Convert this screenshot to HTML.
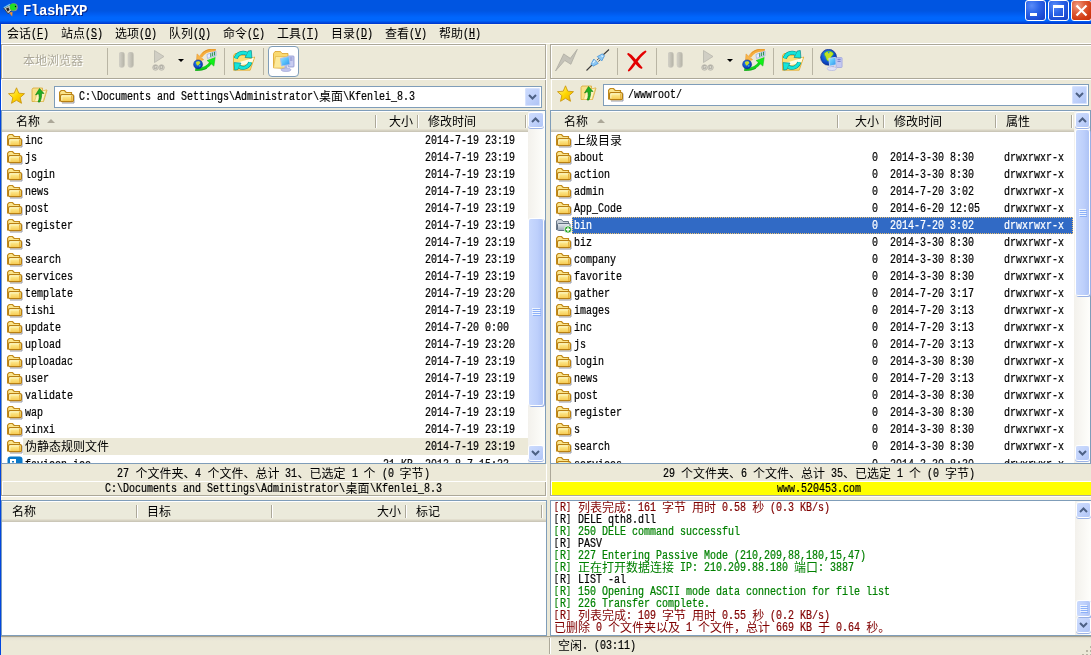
<!DOCTYPE html>
<html lang="zh-CN"><head><meta charset="utf-8"><title>FlashFXP</title>
<style>
html,body{margin:0;padding:0}
body{width:1091px;height:655px;overflow:hidden;background:#ece9d8;position:relative;font-family:"Liberation Mono","Noto Sans CJK SC",monospace}
.t{position:absolute;white-space:pre;font-size:12px;line-height:12px;height:12px;color:#000}
.t b{font-weight:normal;display:inline-block;transform:scaleX(.83333);transform-origin:0 50%;-webkit-text-stroke:.22px}
.t i{font-style:normal;position:relative;top:1px}

.t s{text-decoration:none;font-size:10px;letter-spacing:1.2px;position:relative;top:-1px}
.t u{text-decoration:underline;text-underline-offset:1px}
.ic{position:absolute;overflow:visible}
.w{color:#fff}
.g{color:#008000}.r{color:#800000}
.hd{position:absolute;background:#ebeadb;border-bottom:1px solid #cbc7b8;box-shadow:inset 0 -1px 0 #d6d2c2,inset 0 -2px 0 #e2dece}
.sb{position:absolute;background:linear-gradient(90deg,#f3f1ec,#fefefb)}
.bt{position:absolute;border-radius:2px;background:linear-gradient(135deg,#cddcfd 0%,#c1d2fb 50%,#b0c5f6 100%);box-shadow:0 0 0 1px #fff,0 1px 0 1px #9db4e8}
.th{position:absolute;border-radius:2px;background:linear-gradient(90deg,#c9d9fd,#bdcffb 60%,#aec3f5);box-shadow:0 0 0 1px #fff,1px 1px 0 1px #98b0e4}
</style></head><body><div id="root" style="position:absolute;left:0;top:0;width:1091px;height:655px;overflow:hidden;will-change:transform">
<svg width="0" height="0" style="position:absolute">
<defs>
<linearGradient id="gf" x1="0" y1="0" x2="0" y2="1"><stop offset="0" stop-color="#fff6a8"/><stop offset="1" stop-color="#f6c84c"/></linearGradient>
<linearGradient id="gf2" x1="0" y1="0" x2="0" y2="1"><stop offset="0" stop-color="#e8ecf0"/><stop offset="1" stop-color="#9aa8b8"/></linearGradient>
<linearGradient id="gp" x1="0" y1="0" x2="1" y2="0"><stop offset="0" stop-color="#d4d2c8"/><stop offset="1" stop-color="#b4b2a6"/></linearGradient>
<radialGradient id="gg" cx="0.4" cy="0.35" r="0.75"><stop offset="0" stop-color="#2c84f4"/><stop offset=".6" stop-color="#0c4cc8"/><stop offset="1" stop-color="#06248c"/></radialGradient>
<linearGradient id="gs" x1="0" y1="0" x2="1" y2="1"><stop offset="0" stop-color="#fff9a0"/><stop offset="0.5" stop-color="#ffd800"/><stop offset="1" stop-color="#e8a800"/></linearGradient>
<linearGradient id="gm" x1="0" y1="0" x2="1" y2="1"><stop offset="0" stop-color="#9ae4ff"/><stop offset=".5" stop-color="#58c0fa"/><stop offset="1" stop-color="#2e8cec"/></linearGradient>
<symbol id="fo" viewBox="0 0 16 16">
<path d="M15 7.500v7.500H3" fill="none" stroke="#6a7088" stroke-opacity=".7" stroke-width="1"/>
<path d="M.600 13.500V4.200L2.200 2.500h3.300L7.200 4.500h5.300v2.500" fill="#fbe58c" stroke="#c0891a" stroke-width="1.200"/>
<rect x="1.600" y="6.600" width="12.800" height="7" rx="1.200" fill="url(#gf)" stroke="#b87f12" stroke-width="1.200"/>
<path d="M2.800 12.500v-4.700h9" fill="none" stroke="#fffbd0" stroke-opacity=".95"/>
<path d="M12.500 8v5" stroke="#eab540" stroke-width="1"/>
</symbol>
<symbol id="fos" viewBox="0 0 16 16">
<path d="M.5 13V4L2 2.5h3.5L7 4.5h5.5v2.5" fill="#c8d0d8" stroke="#6a7888"/>
<rect x="1.5" y="6.5" width="12.5" height="7" rx="1" fill="url(#gf2)" stroke="#5f6f80"/>
<circle cx="12" cy="12.5" r="3.6" fill="#18a018" stroke="#fff" stroke-width=".8"/>
<path d="M12 10.3v4.4M9.8 12.5h4.4" stroke="#fff" stroke-width="1.4"/>
</symbol>
<symbol id="dd" viewBox="0 0 9 6"><path d="M1 1l3.5 3.5L8 1" fill="none" stroke="#4d6185" stroke-width="2"/></symbol>
<symbol id="du" viewBox="0 0 9 6"><path d="M1 5l3.5-3.5L8 5" fill="none" stroke="#4d6185" stroke-width="2"/></symbol>
<symbol id="pause" viewBox="0 0 16 16"><rect x="0" y="0" width="5.5" height="15.5" rx="2.7" fill="url(#gp)" stroke="#c8c6bc" stroke-width=".5"/><rect x="9" y="0" width="5.5" height="15.5" rx="2.7" fill="url(#gp)" stroke="#c8c6bc" stroke-width=".5"/></symbol>
<symbol id="play" viewBox="0 0 14 22"><path d="M2.5 .5l9.5 6-9.5 6z" fill="#d0cec4" stroke="#b8b6ac" stroke-width=".8"/><circle cx="3.5" cy="17.5" r="2.8" fill="#d8d6cc" stroke="#b0aea4" stroke-width=".7"/><circle cx="9.5" cy="17.5" r="2.8" fill="#d8d6cc" stroke="#b0aea4" stroke-width=".7"/><text x="1.6" y="19.3" font-family="Liberation Sans,sans-serif" font-size="5" font-weight="bold" fill="#a8a69c">G</text><text x="7.6" y="19.3" font-family="Liberation Sans,sans-serif" font-size="5" font-weight="bold" fill="#a8a69c">O</text></symbol>
<symbol id="xfer" viewBox="0 0 24 22">
<path d="M2.300 20.300c7 .5 12.500-1.300 16-7.500" fill="none" stroke="#14d21c" stroke-width="2.800"/>
<path d="M2 21.200c5 .5 9-.3 12-2" fill="none" stroke="#0a9a10" stroke-width=".7"/>
<path d="M14.100 11.500l8.100-3-1.300 8.600z" fill="#10f018" stroke="#0cb414" stroke-width=".5"/>
<path d="M22.800 1.100c-7-.6-12.300 1.800-15 6.800" fill="none" stroke="#f6ac3c" stroke-width="3"/>
<path d="M22.800 .2c-6-.4-10.500 1-13.500 4" fill="none" stroke="#d8861c" stroke-width=".6"/>
<path d="M4 4.900l6.700 5.800-7.300 2.300z" fill="#f9b548" stroke="#e0922a" stroke-width=".5"/>
<path d="M14 5.500l9-3.400v4.700l-8.500 2.600z" fill="#e6ecff" stroke="#8aa0e0" stroke-width=".6"/>
<path d="M17.800 4.300v3.600M19.700 3.600v3.600M21.600 2.900v3.600" stroke="#1c8a3c" stroke-width="1"/>
<circle cx="5.100" cy="15.400" r="4.500" fill="url(#gg)" stroke="#0a2484" stroke-width=".5"/>
<path d="M3 13c1.800-1.200 3.800-.8 4.300.4.200 1.200-1.200 1.400-1.600 2.600-.4.900-1.800.5-2.200-.8-.4-.8-.7-1.500-.5-2.200z" fill="#c8dc28"/><path d="M6 16.300c.9-.4 1.700 0 1.700.8l-1.200.9z" fill="#38c0e8"/>
</symbol>
<symbol id="refr" viewBox="0 0 24 22">
<path d="M1.500 20.200V5.500l1.500-2h5l1.500 2h8.500v3.300l4.700-1.800-4.500 13.200z" fill="#fbdf74" stroke="#e2a82a" stroke-width=".8"/>
<path d="M2.500 12.500c6-.5 12.500-2.300 19.500-5l-1.500 4.500c-6 2.500-12 3.500-18 3.500z" fill="#fffbe6"/>
<path d="M3.760 8.360A7.500 7.500 0 0 1 14.750 3.800" stroke="#0e8888" stroke-width="4" fill="none"/>
<path d="M18.240 12.240A7.500 7.500 0 0 1 7.250 16.800" stroke="#0e8888" stroke-width="4" fill="none"/>
<path d="M13.100 7.500L16.100 1.100 19.300 .500l.6 7.500z" fill="#14e6da" stroke="#0e8888" stroke-width=".7"/>
<path d="M8.900 13.100L5.900 19.500 2.700 20.100l-.6-7.500z" fill="#14e6da" stroke="#0e8888" stroke-width=".7"/>
<path d="M3.760 8.360A7.500 7.500 0 0 1 14.750 3.800" stroke="#14e6da" stroke-width="2.800" fill="none"/>
<path d="M18.240 12.240A7.500 7.500 0 0 1 7.250 16.800" stroke="#14e6da" stroke-width="2.800" fill="none"/>
</symbol>
<symbol id="fpc" viewBox="0 0 24 22">
<path d="M1.500 17.500V3.500l1.500-2h5.500l1.500 2h6v5l-3 10z" fill="#f9d970" stroke="#d8a028" stroke-width=".8"/>
<path d="M3.500 6.500h13.500l-3.500 11.500h-12z" fill="#fce99a" stroke="#e0b040" stroke-width=".6"/>
<rect x="16" y="6" width="6" height="11" rx=".8" fill="#c8ccf0" stroke="#8088c8" stroke-width=".7"/>
<path d="M17.500 8h3M17.500 10h3" stroke="#7078c0" stroke-width=".8"/>
<path d="M8.500 8.500l8.500-2 1 8-8.500 1.500z" fill="url(#gm)" stroke="#a8c0f0" stroke-width="1"/>
<path d="M12.500 16l2.500-.5.500 3h-3z" fill="#b0b8e8"/><ellipse cx="14" cy="19.800" rx="5" ry="1.800" fill="#c0c4ec" stroke="#9098d0" stroke-width=".5"/>
</symbol>
<symbol id="gpc" viewBox="0 0 24 22">
<circle cx="8.600" cy="8.300" r="8" fill="url(#gg)" stroke="#0a2484" stroke-width=".6"/>
<path d="M4.500 4c2-2 6-2.300 8.300-.5 1.500 1.800-.8 3.200-1.800 4.700-.5 2-1.500 4-3.200 3.800-2-1-1.500-3.200-2.500-4.700C4.500 6 4 5 4.500 4z" fill="#c4e020" stroke="#38b048" stroke-width=".7"/><circle cx="8.700" cy="3.600" r=".8" fill="#1c8cf0"/>
<rect x="16.100" y="8.500" width="6" height="10" rx=".8" fill="#c4c8f0" stroke="#9aa0dc" stroke-width=".7"/>
<path d="M17.500 10.300h3.200M17.500 12.300h3.200" stroke="#6870c8" stroke-width=".9"/>
<path d="M8.800 9.400l6.900-1.100.4 7.500-6.400 1.300z" fill="url(#gm)" stroke="#c8d4f4" stroke-width=".9"/>
<path d="M11.300 17.200l2.600-.5.500 2.300h-3.400z" fill="#a8acdc"/><ellipse cx="11.800" cy="19.600" rx="4.600" ry="2" fill="#e0e2f8" stroke="#a8acdc" stroke-width=".6"/>
</symbol>
<symbol id="bolt" viewBox="0 0 24 22"><path d="M.500 22L8.700 4.900l6.600 4.400L22.300 .300 15.900 15.300 9.800 11.500z" fill="#c4c2b8" stroke="#a8a69c" stroke-width=".7" stroke-linejoin="round"/></symbol>
<symbol id="plug" viewBox="0 0 24 22">
<path d="M.500 21.500l6.500-6.500M16.500 6.500l6.500-6" stroke="#3c3c3c" stroke-width="1.100"/>
<path d="M11 11.200l2-2M12.300 12.600l2-2" stroke="#333" stroke-width=".9"/>
<path d="M5 15.200l2.800-5.200 4.400 4.400-5.200 2.800z" fill="#8cc8f4" stroke="#4a94d8" stroke-width=".8"/>
<path d="M18.500 6.800l-2.800 5.200-4.400-4.400 5.200-2.800z" fill="#8cc8f4" stroke="#4a94d8" stroke-width=".8"/>
<path d="M6.800 13.800l2.200-2.200M15.200 6.800l2 .8" stroke="#e4f4ff" stroke-width="1.100"/>
</symbol>
<symbol id="redx" viewBox="0 0 20 22"><path d="M1.200 4c2 .8 4 2.500 6.500 5.500 2.500 3 4.500 5.800 6.800 8.300-1.500-.3-3-1.500-5.300-4.300C6.500 10 3.500 6 1.200 4z" fill="#e00000" stroke="#e00000" stroke-width="1.900" stroke-linejoin="round"/><path d="M18.500 1.500c-3 1.500-6 4.500-9 8.500S4 17.500 1.800 20.500c1.800-1 3.800-3.500 6.500-7.500 3-4.300 6.500-8.500 10.200-11.500z" fill="#e40000" stroke="#e40000" stroke-width="1.800" stroke-linejoin="round"/></symbol>
<symbol id="star" viewBox="0 0 17 17"><path d="M8.500 .8l2.300 5.400 5.700.5-4.300 3.900 1.300 5.700-5-3-5 3 1.300-5.700L.500 6.700l5.700-.5z" fill="url(#gs)" stroke="#c89000" stroke-width=".8" stroke-linejoin="round"/></symbol>
<symbol id="fup" viewBox="0 0 17 16">
<path d="M1 14.500V2.500l1-1.500h9.500v3l4.500-1-3.500 11.500z" fill="#f8e088" stroke="#d8a838" stroke-width=".8"/>
<path d="M3.500 14.500l3-9.500 9 -2-3.500 11.500z" fill="#fdf4c0" stroke="#e0b850" stroke-width=".6"/>
<path d="M7 15c1.500-3 1.500-6 .5-8.500l-3 1.500 4-6.500 4.500 5-2.500-.2c.5 3-.5 6-1.500 8.700z" fill="#20b020" stroke="#0c7c0c" stroke-width=".6"/>
</symbol>
<symbol id="app" viewBox="0 0 18 18">
<path d="M3.800 8.200L10 4.800l2 5.500-4 3.500z" fill="#c4c4c4" stroke="#383838" stroke-width=".9"/>
<path d="M6 8.500l2.500-1 1 2.500-2 1.500z" fill="#202020"/>
<path d="M3.800 7.800L10 4.400" stroke="#70c8f0" stroke-width="1.300"/>
<circle cx="13.800" cy="7.200" r="4" fill="#8c8c8c"/>
<circle cx="13.200" cy="7" r="3.400" fill="#22e022"/>
<circle cx="15.500" cy="6.500" r=".7" fill="#000"/>
<path d="M9 12.800l3.500-1-.3 4.600z" fill="#f09030"/>
</symbol>
<symbol id="fil" viewBox="0 0 16 16"><rect x=".5" y=".5" width="15" height="15" rx="3" fill="#0a78c8"/><path d="M4 4h4v3.500H4zM8.500 9v5" stroke="#fff" stroke-width="2" fill="none"/></symbol>
</defs></svg>
<div style="position:absolute;left:0px;top:0px;width:1091px;height:24px;background:linear-gradient(180deg,#0055e1 0%,#0055e1 45%,#005cf0 58%,#0066fc 72%,#0066fc 86%,#0050e6 92%,#0034c8 100%)"></div>
<svg class="ic" style="left:0px;top:0px" width="18" height="18"><use href="#app"/></svg>
<div class="t w" style="left:23px;top:5px;font-weight:bold;font-size:14px;letter-spacing:-0.4px;text-shadow:1px 1px 0 #0a2a8c">FlashFXP</div>
<div style="position:absolute;left:1025px;top:0px;width:19px;height:19px;border:1px solid #fff;border-radius:3px;background:radial-gradient(circle at 30% 25%,#5a8cf8 0%,#2c64e8 40%,#1a48d0 80%,#1840c0 100%)"></div>
<div style="position:absolute;left:1048px;top:0px;width:19px;height:19px;border:1px solid #fff;border-radius:3px;background:radial-gradient(circle at 30% 25%,#5a8cf8 0%,#2c64e8 40%,#1a48d0 80%,#1840c0 100%)"></div>
<div style="position:absolute;left:1071px;top:0px;width:19px;height:19px;border:1px solid #fff;border-radius:3px;background:radial-gradient(circle at 30% 25%,#f0a088 0%,#e0603c 35%,#d23c14 70%,#c43010 100%)"></div>
<div style="position:absolute;left:1030px;top:13px;width:7px;height:3px;background:#fff"></div>
<div style="position:absolute;left:1053px;top:5px;width:9px;height:8px;border:1px solid #fff;border-top:3px solid #fff"></div>
<svg class="ic" style="left:1075px;top:4px" width="14" height="14"><path d="M1.500 1.500l10 10M11.500 1.500l-10 10" stroke="#fff" stroke-width="2.200"/></svg>
<div style="position:absolute;left:0px;top:24px;width:1px;height:631px;background:#0046e0"></div>
<div style="position:absolute;left:1px;top:24px;width:1090px;height:1px;background:#f6f2dc"></div>
<div style="position:absolute;left:1px;top:43px;width:1090px;height:1px;background:#fff"></div>
<div class="t " style="left:7px;top:28px;"><i>会话</i><b style="margin-right:-3.6px">(<u>F</u>)</b></div>
<div class="t " style="left:61px;top:28px;"><i>站点</i><b style="margin-right:-3.6px">(<u>S</u>)</b></div>
<div class="t " style="left:115px;top:28px;"><i>选项</i><b style="margin-right:-3.6px">(<u>O</u>)</b></div>
<div class="t " style="left:169px;top:28px;"><i>队列</i><b style="margin-right:-3.6px">(<u>Q</u>)</b></div>
<div class="t " style="left:223px;top:28px;"><i>命令</i><b style="margin-right:-3.6px">(<u>C</u>)</b></div>
<div class="t " style="left:277px;top:28px;"><i>工具</i><b style="margin-right:-3.6px">(<u>T</u>)</b></div>
<div class="t " style="left:331px;top:28px;"><i>目录</i><b style="margin-right:-3.6px">(<u>D</u>)</b></div>
<div class="t " style="left:385px;top:28px;"><i>查看</i><b style="margin-right:-3.6px">(<u>V</u>)</b></div>
<div class="t " style="left:439px;top:28px;"><i>帮助</i><b style="margin-right:-3.6px">(<u>H</u>)</b></div>
<div style="position:absolute;left:2px;top:45px;width:543px;height:33px;border:1px solid #fff"></div>
<div style="position:absolute;left:1px;top:44px;width:543px;height:33px;border:1px solid #aca899"></div>
<div style="position:absolute;left:551px;top:45px;width:542px;height:33px;border:1px solid #fff"></div>
<div style="position:absolute;left:550px;top:44px;width:542px;height:33px;border:1px solid #aca899"></div>
<div class="t " style="left:23px;top:55px;color:#aca899;text-shadow:1px 1px 0 #fff"><i>本地浏览器</i></div>
<div style="position:absolute;left:107px;top:48px;width:1px;height:27px;background:#b9b5a4"></div>
<svg class="ic" style="left:119px;top:52px" width="16" height="16"><use href="#pause"/></svg>
<svg class="ic" style="left:152px;top:50px" width="14" height="22"><use href="#play"/></svg>
<svg class="ic" style="left:178px;top:59px" width="6" height="3"><path d="M0 0h6l-3 3z" fill="#000"/></svg>
<svg class="ic" style="left:193px;top:49px" width="24" height="22"><use href="#xfer"/></svg>
<div style="position:absolute;left:224px;top:48px;width:1px;height:27px;background:#b9b5a4"></div>
<svg class="ic" style="left:232px;top:50px" width="24" height="22"><use href="#refr"/></svg>
<div style="position:absolute;left:263px;top:48px;width:1px;height:27px;background:#b9b5a4"></div>
<div style="position:absolute;left:656px;top:48px;width:1px;height:27px;background:#b9b5a4"></div>
<svg class="ic" style="left:668px;top:52px" width="16" height="16"><use href="#pause"/></svg>
<svg class="ic" style="left:701px;top:50px" width="14" height="22"><use href="#play"/></svg>
<svg class="ic" style="left:727px;top:59px" width="6" height="3"><path d="M0 0h6l-3 3z" fill="#000"/></svg>
<svg class="ic" style="left:742px;top:49px" width="24" height="22"><use href="#xfer"/></svg>
<div style="position:absolute;left:773px;top:48px;width:1px;height:27px;background:#b9b5a4"></div>
<svg class="ic" style="left:781px;top:50px" width="24" height="22"><use href="#refr"/></svg>
<div style="position:absolute;left:812px;top:48px;width:1px;height:27px;background:#b9b5a4"></div>
<div style="position:absolute;left:268px;top:46px;width:29px;height:29px;border:1px solid #7f9db9;border-radius:4px;background:#fff"></div>
<svg class="ic" style="left:272px;top:50px" width="24" height="22"><use href="#fpc"/></svg>
<svg class="ic" style="left:555px;top:49px" width="24" height="22"><use href="#bolt"/></svg>
<svg class="ic" style="left:586px;top:49px" width="24" height="22"><use href="#plug"/></svg>
<div style="position:absolute;left:617px;top:48px;width:1px;height:27px;background:#b9b5a4"></div>
<svg class="ic" style="left:627px;top:50px" width="20" height="22"><use href="#redx"/></svg>
<svg class="ic" style="left:820px;top:49px" width="24" height="22"><use href="#gpc"/></svg>
<div style="position:absolute;left:545px;top:80px;width:1px;height:30px;background:#aca899"></div>
<div style="position:absolute;left:546px;top:80px;width:1px;height:30px;background:#fff"></div>
<div style="position:absolute;left:1px;top:80px;width:1px;height:30px;background:#fff"></div>
<div style="position:absolute;left:551px;top:80px;width:1px;height:30px;background:#fff"></div>
<svg class="ic" style="left:8px;top:87px" width="17" height="17"><use href="#star"/></svg>
<svg class="ic" style="left:31px;top:87px" width="17" height="16"><use href="#fup"/></svg>
<div style="position:absolute;left:54px;top:86px;width:486px;height:20px;border:1px solid #7f9db9;background:#fff"></div>
<svg class="ic" style="left:59px;top:88px" width="16" height="16"><use href="#fo"/></svg>
<div class="t " style="left:79px;top:91px;"><b style="margin-right:-48px">C:\Documents and Settings\Administrator\</b><i>桌面</i><b style="margin-right:-14.4px">\Kfenlei_8.3</b></div>
<div style="position:absolute;left:525px;top:88px;width:15px;height:18px;border-radius:2px;background:linear-gradient(135deg,#cddcfd 0%,#c1d2fb 50%,#adc2f4 100%);box-shadow:inset 0 0 0 1px #d6e2fe"></div>
<svg class="ic" style="left:528px;top:94px" width="9" height="6"><use href="#dd"/></svg>
<svg class="ic" style="left:557px;top:85px" width="17" height="17"><use href="#star"/></svg>
<svg class="ic" style="left:580px;top:85px" width="17" height="16"><use href="#fup"/></svg>
<div style="position:absolute;left:603px;top:84px;width:484px;height:20px;border:1px solid #7f9db9;background:#fff"></div>
<svg class="ic" style="left:608px;top:86px" width="16" height="16"><use href="#fo"/></svg>
<div class="t " style="left:628px;top:89px;"><b style="margin-right:-10.8px">/wwwroot/</b></div>
<div style="position:absolute;left:1072px;top:86px;width:15px;height:18px;border-radius:2px;background:linear-gradient(135deg,#cddcfd 0%,#c1d2fb 50%,#adc2f4 100%);box-shadow:inset 0 0 0 1px #d6e2fe"></div>
<svg class="ic" style="left:1075px;top:92px" width="9" height="6"><use href="#dd"/></svg>
<div style="position:absolute;left:1px;top:110px;width:543px;height:352px;border:1px solid #7f9db9;background:#fff"></div>
<div class="hd" style="position:absolute;left:2px;top:111px;width:526px;height:20px;"></div>
<div style="position:absolute;left:2px;top:111px;width:526px;height:1px;background:#fff"></div>
<div class="t " style="left:16px;top:116px;"><i>名称</i></div>
<svg class="ic" style="left:47px;top:119px" width="8" height="4"><path d="M0 4l4-4 4 4z" fill="#aca899"/></svg>
<div style="position:absolute;left:375px;top:115px;width:1px;height:13px;background:#aca899"></div>
<div style="position:absolute;left:376px;top:115px;width:1px;height:13px;background:#fff"></div>
<div class="t " style="left:389px;top:116px;"><i>大小</i></div>
<div style="position:absolute;left:417px;top:115px;width:1px;height:13px;background:#aca899"></div>
<div style="position:absolute;left:418px;top:115px;width:1px;height:13px;background:#fff"></div>
<div class="t " style="left:428px;top:116px;"><i>修改时间</i></div>
<div style="position:absolute;left:525px;top:115px;width:1px;height:13px;background:#aca899"></div>
<div style="position:absolute;left:526px;top:115px;width:1px;height:13px;background:#fff"></div>
<div class="sb" style="position:absolute;left:528px;top:111px;width:17px;height:352px;"></div>
<div class="bt" style="position:absolute;left:529px;top:113px;width:14px;height:14px;"></div>
<svg class="ic" style="left:531px;top:117px" width="9" height="6"><use href="#du"/></svg>
<div class="bt" style="position:absolute;left:529px;top:446px;width:14px;height:14px;"></div>
<svg class="ic" style="left:531px;top:450px" width="9" height="6"><use href="#dd"/></svg>
<div class="th" style="position:absolute;left:529px;top:219px;width:14px;height:186px;"></div>
<div style="position:absolute;left:532px;top:308px;width:8px;height:1px;background:#eef4fe"></div>
<div style="position:absolute;left:533px;top:309px;width:8px;height:1px;background:#8cb0f8"></div>
<div style="position:absolute;left:532px;top:310px;width:8px;height:1px;background:#eef4fe"></div>
<div style="position:absolute;left:533px;top:311px;width:8px;height:1px;background:#8cb0f8"></div>
<div style="position:absolute;left:532px;top:312px;width:8px;height:1px;background:#eef4fe"></div>
<div style="position:absolute;left:533px;top:313px;width:8px;height:1px;background:#8cb0f8"></div>
<div style="position:absolute;left:532px;top:314px;width:8px;height:1px;background:#eef4fe"></div>
<div style="position:absolute;left:533px;top:315px;width:8px;height:1px;background:#8cb0f8"></div>
<div style="position:absolute;left:2px;top:132px;width:526px;height:331px;overflow:hidden">
<svg class="ic" style="left:5px;top:0px" width="16" height="16"><use href="#fo"/></svg>
<div class="t " style="left:23px;top:3px;"><b style="margin-right:-3.6px">inc</b></div>
<div class="t " style="left:423px;top:3px;"><b style="margin-right:-18px">2014-7-19 23:19</b></div>
<svg class="ic" style="left:5px;top:17px" width="16" height="16"><use href="#fo"/></svg>
<div class="t " style="left:23px;top:20px;"><b style="margin-right:-2.4px">js</b></div>
<div class="t " style="left:423px;top:20px;"><b style="margin-right:-18px">2014-7-19 23:19</b></div>
<svg class="ic" style="left:5px;top:34px" width="16" height="16"><use href="#fo"/></svg>
<div class="t " style="left:23px;top:37px;"><b style="margin-right:-6px">login</b></div>
<div class="t " style="left:423px;top:37px;"><b style="margin-right:-18px">2014-7-19 23:19</b></div>
<svg class="ic" style="left:5px;top:51px" width="16" height="16"><use href="#fo"/></svg>
<div class="t " style="left:23px;top:54px;"><b style="margin-right:-4.8px">news</b></div>
<div class="t " style="left:423px;top:54px;"><b style="margin-right:-18px">2014-7-19 23:19</b></div>
<svg class="ic" style="left:5px;top:68px" width="16" height="16"><use href="#fo"/></svg>
<div class="t " style="left:23px;top:71px;"><b style="margin-right:-4.8px">post</b></div>
<div class="t " style="left:423px;top:71px;"><b style="margin-right:-18px">2014-7-19 23:19</b></div>
<svg class="ic" style="left:5px;top:85px" width="16" height="16"><use href="#fo"/></svg>
<div class="t " style="left:23px;top:88px;"><b style="margin-right:-9.6px">register</b></div>
<div class="t " style="left:423px;top:88px;"><b style="margin-right:-18px">2014-7-19 23:19</b></div>
<svg class="ic" style="left:5px;top:102px" width="16" height="16"><use href="#fo"/></svg>
<div class="t " style="left:23px;top:105px;"><b style="margin-right:-1.2px">s</b></div>
<div class="t " style="left:423px;top:105px;"><b style="margin-right:-18px">2014-7-19 23:19</b></div>
<svg class="ic" style="left:5px;top:119px" width="16" height="16"><use href="#fo"/></svg>
<div class="t " style="left:23px;top:122px;"><b style="margin-right:-7.2px">search</b></div>
<div class="t " style="left:423px;top:122px;"><b style="margin-right:-18px">2014-7-19 23:19</b></div>
<svg class="ic" style="left:5px;top:136px" width="16" height="16"><use href="#fo"/></svg>
<div class="t " style="left:23px;top:139px;"><b style="margin-right:-9.6px">services</b></div>
<div class="t " style="left:423px;top:139px;"><b style="margin-right:-18px">2014-7-19 23:19</b></div>
<svg class="ic" style="left:5px;top:153px" width="16" height="16"><use href="#fo"/></svg>
<div class="t " style="left:23px;top:156px;"><b style="margin-right:-9.6px">template</b></div>
<div class="t " style="left:423px;top:156px;"><b style="margin-right:-18px">2014-7-19 23:20</b></div>
<svg class="ic" style="left:5px;top:170px" width="16" height="16"><use href="#fo"/></svg>
<div class="t " style="left:23px;top:173px;"><b style="margin-right:-6px">tishi</b></div>
<div class="t " style="left:423px;top:173px;"><b style="margin-right:-18px">2014-7-19 23:19</b></div>
<svg class="ic" style="left:5px;top:187px" width="16" height="16"><use href="#fo"/></svg>
<div class="t " style="left:23px;top:190px;"><b style="margin-right:-7.2px">update</b></div>
<div class="t " style="left:423px;top:190px;"><b style="margin-right:-16.8px">2014-7-20 0:00</b></div>
<svg class="ic" style="left:5px;top:204px" width="16" height="16"><use href="#fo"/></svg>
<div class="t " style="left:23px;top:207px;"><b style="margin-right:-7.2px">upload</b></div>
<div class="t " style="left:423px;top:207px;"><b style="margin-right:-18px">2014-7-19 23:20</b></div>
<svg class="ic" style="left:5px;top:221px" width="16" height="16"><use href="#fo"/></svg>
<div class="t " style="left:23px;top:224px;"><b style="margin-right:-9.6px">uploadac</b></div>
<div class="t " style="left:423px;top:224px;"><b style="margin-right:-18px">2014-7-19 23:19</b></div>
<svg class="ic" style="left:5px;top:238px" width="16" height="16"><use href="#fo"/></svg>
<div class="t " style="left:23px;top:241px;"><b style="margin-right:-4.8px">user</b></div>
<div class="t " style="left:423px;top:241px;"><b style="margin-right:-18px">2014-7-19 23:19</b></div>
<svg class="ic" style="left:5px;top:255px" width="16" height="16"><use href="#fo"/></svg>
<div class="t " style="left:23px;top:258px;"><b style="margin-right:-9.6px">validate</b></div>
<div class="t " style="left:423px;top:258px;"><b style="margin-right:-18px">2014-7-19 23:19</b></div>
<svg class="ic" style="left:5px;top:272px" width="16" height="16"><use href="#fo"/></svg>
<div class="t " style="left:23px;top:275px;"><b style="margin-right:-3.6px">wap</b></div>
<div class="t " style="left:423px;top:275px;"><b style="margin-right:-18px">2014-7-19 23:19</b></div>
<svg class="ic" style="left:5px;top:289px" width="16" height="16"><use href="#fo"/></svg>
<div class="t " style="left:23px;top:292px;"><b style="margin-right:-6px">xinxi</b></div>
<div class="t " style="left:423px;top:292px;"><b style="margin-right:-18px">2014-7-19 23:19</b></div>
<div style="position:absolute;left:21px;top:306px;width:505px;height:17px;background:#ece9d8"></div>
<svg class="ic" style="left:5px;top:306px" width="16" height="16"><use href="#fo"/></svg>
<div class="t " style="left:23px;top:309px;"><i>伪静态规则文件</i></div>
<div class="t " style="left:423px;top:309px;"><b style="margin-right:-18px">2014-7-19 23:19</b></div>
<svg class="ic" style="left:5px;top:324px" width="16" height="16"><use href="#fil"/></svg>
<div class="t " style="left:23px;top:327px;"><b style="margin-right:-13.2px">favicon.ico</b></div>
<div class="t " style="right:678px;top:327px;right:115px"><b style="margin-right:-6px">21 KB</b></div>
<div class="t " style="left:423px;top:327px;"><b style="margin-right:-16.8px">2013-8-7 15:23</b></div>
</div>
<div style="position:absolute;left:550px;top:110px;width:539px;height:352px;border:1px solid #7f9db9;background:#fff"></div>
<div class="hd" style="position:absolute;left:551px;top:111px;width:523px;height:20px;"></div>
<div style="position:absolute;left:551px;top:111px;width:523px;height:1px;background:#fff"></div>
<div class="t " style="left:564px;top:116px;"><i>名称</i></div>
<svg class="ic" style="left:597px;top:119px" width="8" height="4"><path d="M0 4l4-4 4 4z" fill="#aca899"/></svg>
<div style="position:absolute;left:837px;top:115px;width:1px;height:13px;background:#aca899"></div>
<div style="position:absolute;left:838px;top:115px;width:1px;height:13px;background:#fff"></div>
<div class="t " style="left:855px;top:116px;"><i>大小</i></div>
<div style="position:absolute;left:883px;top:115px;width:1px;height:13px;background:#aca899"></div>
<div style="position:absolute;left:884px;top:115px;width:1px;height:13px;background:#fff"></div>
<div class="t " style="left:894px;top:116px;"><i>修改时间</i></div>
<div style="position:absolute;left:995px;top:115px;width:1px;height:13px;background:#aca899"></div>
<div style="position:absolute;left:996px;top:115px;width:1px;height:13px;background:#fff"></div>
<div class="t " style="left:1006px;top:116px;"><i>属性</i></div>
<div style="position:absolute;left:1071px;top:115px;width:1px;height:13px;background:#aca899"></div>
<div style="position:absolute;left:1072px;top:115px;width:1px;height:13px;background:#fff"></div>
<div class="sb" style="position:absolute;left:1074px;top:111px;width:16px;height:352px;"></div>
<div class="bt" style="position:absolute;left:1076px;top:113px;width:13px;height:14px;"></div>
<svg class="ic" style="left:1078px;top:117px" width="9" height="6"><use href="#du"/></svg>
<div class="bt" style="position:absolute;left:1076px;top:446px;width:13px;height:14px;"></div>
<svg class="ic" style="left:1078px;top:450px" width="9" height="6"><use href="#dd"/></svg>
<div class="th" style="position:absolute;left:1076px;top:130px;width:13px;height:165px;"></div>
<div style="position:absolute;left:1079px;top:209px;width:7px;height:1px;background:#eef4fe"></div>
<div style="position:absolute;left:1080px;top:210px;width:7px;height:1px;background:#8cb0f8"></div>
<div style="position:absolute;left:1079px;top:211px;width:7px;height:1px;background:#eef4fe"></div>
<div style="position:absolute;left:1080px;top:212px;width:7px;height:1px;background:#8cb0f8"></div>
<div style="position:absolute;left:1079px;top:213px;width:7px;height:1px;background:#eef4fe"></div>
<div style="position:absolute;left:1080px;top:214px;width:7px;height:1px;background:#8cb0f8"></div>
<div style="position:absolute;left:1079px;top:215px;width:7px;height:1px;background:#eef4fe"></div>
<div style="position:absolute;left:1080px;top:216px;width:7px;height:1px;background:#8cb0f8"></div>
<div style="position:absolute;left:551px;top:132px;width:523px;height:331px;overflow:hidden">
<svg class="ic" style="left:5px;top:0px" width="16" height="16"><use href="#fo"/></svg>
<div class="t " style="left:23px;top:3px;"><i>上级目录</i></div>
<svg class="ic" style="left:5px;top:17px" width="16" height="16"><use href="#fo"/></svg>
<div class="t " style="left:23px;top:20px;"><b style="margin-right:-6px">about</b></div>
<div class="t " style="left:321px;top:20px;"><b style="margin-right:-1.2px">0</b></div>
<div class="t " style="left:339px;top:20px;"><b style="margin-right:-16.8px">2014-3-30 8:30</b></div>
<div class="t " style="left:453px;top:20px;"><b style="margin-right:-12px">drwxrwxr-x</b></div>
<svg class="ic" style="left:5px;top:34px" width="16" height="16"><use href="#fo"/></svg>
<div class="t " style="left:23px;top:37px;"><b style="margin-right:-7.2px">action</b></div>
<div class="t " style="left:321px;top:37px;"><b style="margin-right:-1.2px">0</b></div>
<div class="t " style="left:339px;top:37px;"><b style="margin-right:-16.8px">2014-3-30 8:30</b></div>
<div class="t " style="left:453px;top:37px;"><b style="margin-right:-12px">drwxrwxr-x</b></div>
<svg class="ic" style="left:5px;top:51px" width="16" height="16"><use href="#fo"/></svg>
<div class="t " style="left:23px;top:54px;"><b style="margin-right:-6px">admin</b></div>
<div class="t " style="left:321px;top:54px;"><b style="margin-right:-1.2px">0</b></div>
<div class="t " style="left:339px;top:54px;"><b style="margin-right:-16.8px">2014-7-20 3:02</b></div>
<div class="t " style="left:453px;top:54px;"><b style="margin-right:-12px">drwxrwxr-x</b></div>
<svg class="ic" style="left:5px;top:68px" width="16" height="16"><use href="#fo"/></svg>
<div class="t " style="left:23px;top:71px;"><b style="margin-right:-9.6px">App_Code</b></div>
<div class="t " style="left:321px;top:71px;"><b style="margin-right:-1.2px">0</b></div>
<div class="t " style="left:339px;top:71px;"><b style="margin-right:-18px">2014-6-20 12:05</b></div>
<div class="t " style="left:453px;top:71px;"><b style="margin-right:-12px">drwxrwxr-x</b></div>
<div style="position:absolute;left:21px;top:85px;width:501px;height:17px;background:#316ac5;outline:1px dotted #e8c070;outline-offset:-1px"></div>
<svg class="ic" style="left:5px;top:85px" width="16" height="16"><use href="#fos"/></svg>
<div class="t w" style="left:23px;top:88px;"><b style="margin-right:-3.6px">bin</b></div>
<div class="t w" style="left:321px;top:88px;"><b style="margin-right:-1.2px">0</b></div>
<div class="t w" style="left:339px;top:88px;"><b style="margin-right:-16.8px">2014-7-20 3:02</b></div>
<div class="t w" style="left:453px;top:88px;"><b style="margin-right:-12px">drwxrwxr-x</b></div>
<svg class="ic" style="left:5px;top:102px" width="16" height="16"><use href="#fo"/></svg>
<div class="t " style="left:23px;top:105px;"><b style="margin-right:-3.6px">biz</b></div>
<div class="t " style="left:321px;top:105px;"><b style="margin-right:-1.2px">0</b></div>
<div class="t " style="left:339px;top:105px;"><b style="margin-right:-16.8px">2014-3-30 8:30</b></div>
<div class="t " style="left:453px;top:105px;"><b style="margin-right:-12px">drwxrwxr-x</b></div>
<svg class="ic" style="left:5px;top:119px" width="16" height="16"><use href="#fo"/></svg>
<div class="t " style="left:23px;top:122px;"><b style="margin-right:-8.4px">company</b></div>
<div class="t " style="left:321px;top:122px;"><b style="margin-right:-1.2px">0</b></div>
<div class="t " style="left:339px;top:122px;"><b style="margin-right:-16.8px">2014-3-30 8:30</b></div>
<div class="t " style="left:453px;top:122px;"><b style="margin-right:-12px">drwxrwxr-x</b></div>
<svg class="ic" style="left:5px;top:136px" width="16" height="16"><use href="#fo"/></svg>
<div class="t " style="left:23px;top:139px;"><b style="margin-right:-9.6px">favorite</b></div>
<div class="t " style="left:321px;top:139px;"><b style="margin-right:-1.2px">0</b></div>
<div class="t " style="left:339px;top:139px;"><b style="margin-right:-16.8px">2014-3-30 8:30</b></div>
<div class="t " style="left:453px;top:139px;"><b style="margin-right:-12px">drwxrwxr-x</b></div>
<svg class="ic" style="left:5px;top:153px" width="16" height="16"><use href="#fo"/></svg>
<div class="t " style="left:23px;top:156px;"><b style="margin-right:-7.2px">gather</b></div>
<div class="t " style="left:321px;top:156px;"><b style="margin-right:-1.2px">0</b></div>
<div class="t " style="left:339px;top:156px;"><b style="margin-right:-16.8px">2014-7-20 3:17</b></div>
<div class="t " style="left:453px;top:156px;"><b style="margin-right:-12px">drwxrwxr-x</b></div>
<svg class="ic" style="left:5px;top:170px" width="16" height="16"><use href="#fo"/></svg>
<div class="t " style="left:23px;top:173px;"><b style="margin-right:-7.2px">images</b></div>
<div class="t " style="left:321px;top:173px;"><b style="margin-right:-1.2px">0</b></div>
<div class="t " style="left:339px;top:173px;"><b style="margin-right:-16.8px">2014-7-20 3:13</b></div>
<div class="t " style="left:453px;top:173px;"><b style="margin-right:-12px">drwxrwxr-x</b></div>
<svg class="ic" style="left:5px;top:187px" width="16" height="16"><use href="#fo"/></svg>
<div class="t " style="left:23px;top:190px;"><b style="margin-right:-3.6px">inc</b></div>
<div class="t " style="left:321px;top:190px;"><b style="margin-right:-1.2px">0</b></div>
<div class="t " style="left:339px;top:190px;"><b style="margin-right:-16.8px">2014-7-20 3:13</b></div>
<div class="t " style="left:453px;top:190px;"><b style="margin-right:-12px">drwxrwxr-x</b></div>
<svg class="ic" style="left:5px;top:204px" width="16" height="16"><use href="#fo"/></svg>
<div class="t " style="left:23px;top:207px;"><b style="margin-right:-2.4px">js</b></div>
<div class="t " style="left:321px;top:207px;"><b style="margin-right:-1.2px">0</b></div>
<div class="t " style="left:339px;top:207px;"><b style="margin-right:-16.8px">2014-7-20 3:13</b></div>
<div class="t " style="left:453px;top:207px;"><b style="margin-right:-12px">drwxrwxr-x</b></div>
<svg class="ic" style="left:5px;top:221px" width="16" height="16"><use href="#fo"/></svg>
<div class="t " style="left:23px;top:224px;"><b style="margin-right:-6px">login</b></div>
<div class="t " style="left:321px;top:224px;"><b style="margin-right:-1.2px">0</b></div>
<div class="t " style="left:339px;top:224px;"><b style="margin-right:-16.8px">2014-3-30 8:30</b></div>
<div class="t " style="left:453px;top:224px;"><b style="margin-right:-12px">drwxrwxr-x</b></div>
<svg class="ic" style="left:5px;top:238px" width="16" height="16"><use href="#fo"/></svg>
<div class="t " style="left:23px;top:241px;"><b style="margin-right:-4.8px">news</b></div>
<div class="t " style="left:321px;top:241px;"><b style="margin-right:-1.2px">0</b></div>
<div class="t " style="left:339px;top:241px;"><b style="margin-right:-16.8px">2014-7-20 3:13</b></div>
<div class="t " style="left:453px;top:241px;"><b style="margin-right:-12px">drwxrwxr-x</b></div>
<svg class="ic" style="left:5px;top:255px" width="16" height="16"><use href="#fo"/></svg>
<div class="t " style="left:23px;top:258px;"><b style="margin-right:-4.8px">post</b></div>
<div class="t " style="left:321px;top:258px;"><b style="margin-right:-1.2px">0</b></div>
<div class="t " style="left:339px;top:258px;"><b style="margin-right:-16.8px">2014-3-30 8:30</b></div>
<div class="t " style="left:453px;top:258px;"><b style="margin-right:-12px">drwxrwxr-x</b></div>
<svg class="ic" style="left:5px;top:272px" width="16" height="16"><use href="#fo"/></svg>
<div class="t " style="left:23px;top:275px;"><b style="margin-right:-9.6px">register</b></div>
<div class="t " style="left:321px;top:275px;"><b style="margin-right:-1.2px">0</b></div>
<div class="t " style="left:339px;top:275px;"><b style="margin-right:-16.8px">2014-3-30 8:30</b></div>
<div class="t " style="left:453px;top:275px;"><b style="margin-right:-12px">drwxrwxr-x</b></div>
<svg class="ic" style="left:5px;top:289px" width="16" height="16"><use href="#fo"/></svg>
<div class="t " style="left:23px;top:292px;"><b style="margin-right:-1.2px">s</b></div>
<div class="t " style="left:321px;top:292px;"><b style="margin-right:-1.2px">0</b></div>
<div class="t " style="left:339px;top:292px;"><b style="margin-right:-16.8px">2014-3-30 8:30</b></div>
<div class="t " style="left:453px;top:292px;"><b style="margin-right:-12px">drwxrwxr-x</b></div>
<svg class="ic" style="left:5px;top:306px" width="16" height="16"><use href="#fo"/></svg>
<div class="t " style="left:23px;top:309px;"><b style="margin-right:-7.2px">search</b></div>
<div class="t " style="left:321px;top:309px;"><b style="margin-right:-1.2px">0</b></div>
<div class="t " style="left:339px;top:309px;"><b style="margin-right:-16.8px">2014-3-30 8:30</b></div>
<div class="t " style="left:453px;top:309px;"><b style="margin-right:-12px">drwxrwxr-x</b></div>
<svg class="ic" style="left:5px;top:323px" width="16" height="16"><use href="#fo"/></svg>
<div class="t " style="left:23px;top:327px;"><b style="margin-right:-9.6px">services</b></div>
<div class="t " style="left:321px;top:327px;"><b style="margin-right:-1.2px">0</b></div>
<div class="t " style="left:339px;top:327px;"><b style="margin-right:-16.8px">2014-3-30 8:30</b></div>
<div class="t " style="left:453px;top:327px;"><b style="margin-right:-12px">drwxrwxr-x</b></div>
</div>
<div style="position:absolute;left:1px;top:464px;width:1px;height:32px;background:#aca899"></div>
<div style="position:absolute;left:2px;top:481px;width:544px;height:1px;background:#fff"></div>
<div style="position:absolute;left:2px;top:481px;width:1px;height:15px;background:#fff"></div>
<div style="position:absolute;left:2px;top:495px;width:544px;height:1px;background:#aca899"></div>
<div style="position:absolute;left:545px;top:482px;width:1px;height:14px;background:#aca899"></div>
<div style="position:absolute;left:1px;top:496px;width:546px;height:1px;background:#fff"></div>
<div style="position:absolute;left:546px;top:464px;width:1px;height:33px;background:#fff"></div>
<div class="t" style="left:2px;width:543px;top:468px;text-align:center;"><b style="margin-right:-3.6px">27 </b><i>个文件夹、</i><b style="margin-right:-2.4px">4 </b><i>个文件、总计</i><b style="margin-right:-3.6px"> 31</b><i>、已选定</i><b style="margin-right:-3.6px"> 1 </b><i>个</i><b style="margin-right:-4.8px"> (0 </b><i>字节</i><b style="margin-right:-1.2px">)</b></div>
<div class="t" style="left:2px;width:543px;top:483px;text-align:center;"><b style="margin-right:-48px">C:\Documents and Settings\Administrator\</b><i>桌面</i><b style="margin-right:-14.4px">\Kfenlei_8.3</b></div>
<div style="position:absolute;left:550px;top:464px;width:1px;height:32px;background:#aca899"></div>
<div style="position:absolute;left:551px;top:481px;width:540px;height:1px;background:#fff"></div>
<div style="position:absolute;left:551px;top:481px;width:1px;height:15px;background:#fff"></div>
<div style="position:absolute;left:551px;top:495px;width:540px;height:1px;background:#aca899"></div>
<div style="position:absolute;left:550px;top:496px;width:541px;height:1px;background:#fff"></div>
<div style="position:absolute;left:552px;top:482px;width:539px;height:13px;background:#ffff00"></div>
<div class="t" style="left:549px;width:540px;top:468px;text-align:center;"><b style="margin-right:-3.6px">29 </b><i>个文件夹、</i><b style="margin-right:-2.4px">6 </b><i>个文件、总计</i><b style="margin-right:-3.6px"> 35</b><i>、已选定</i><b style="margin-right:-3.6px"> 1 </b><i>个</i><b style="margin-right:-4.8px"> (0 </b><i>字节</i><b style="margin-right:-1.2px">)</b></div>
<div class="t" style="left:549px;width:540px;top:483px;text-align:center;"><b style="margin-right:-16.8px">www.520453.com</b></div>
<div style="position:absolute;left:1px;top:497px;width:546px;height:3px;background:#f4f0e0"></div>
<div style="position:absolute;left:550px;top:497px;width:541px;height:3px;background:#f4f0e0"></div>
<div style="position:absolute;left:1px;top:500px;width:544px;height:134px;border:1px solid #7f9db9;background:#fff"></div>
<div class="hd" style="position:absolute;left:2px;top:501px;width:544px;height:20px;"></div>
<div style="position:absolute;left:2px;top:501px;width:544px;height:1px;background:#fff"></div>
<div class="t " style="left:12px;top:506px;"><i>名称</i></div>
<div style="position:absolute;left:136px;top:505px;width:1px;height:13px;background:#aca899"></div>
<div style="position:absolute;left:137px;top:505px;width:1px;height:13px;background:#fff"></div>
<div class="t " style="left:147px;top:506px;"><i>目标</i></div>
<div style="position:absolute;left:271px;top:505px;width:1px;height:13px;background:#aca899"></div>
<div style="position:absolute;left:272px;top:505px;width:1px;height:13px;background:#fff"></div>
<div class="t " style="left:377px;top:506px;"><i>大小</i></div>
<div style="position:absolute;left:405px;top:505px;width:1px;height:13px;background:#aca899"></div>
<div style="position:absolute;left:406px;top:505px;width:1px;height:13px;background:#fff"></div>
<div class="t " style="left:416px;top:506px;"><i>标记</i></div>
<div style="position:absolute;left:541px;top:505px;width:1px;height:13px;background:#aca899"></div>
<div style="position:absolute;left:542px;top:505px;width:1px;height:13px;background:#fff"></div>
<div style="position:absolute;left:550px;top:500px;width:541px;height:134px;border:1px solid #7f9db9;background:#fff"></div>
<div class="sb" style="position:absolute;left:1075px;top:501px;width:16px;height:134px;"></div>
<div class="bt" style="position:absolute;left:1077px;top:503px;width:13px;height:14px;"></div>
<svg class="ic" style="left:1079px;top:507px" width="9" height="6"><use href="#du"/></svg>
<div class="bt" style="position:absolute;left:1077px;top:618px;width:13px;height:14px;"></div>
<svg class="ic" style="left:1079px;top:622px" width="9" height="6"><use href="#dd"/></svg>
<div class="th" style="position:absolute;left:1077px;top:601px;width:13px;height:15px;"></div>
<div style="position:absolute;left:1080px;top:605px;width:7px;height:1px;background:#eef4fe"></div>
<div style="position:absolute;left:1081px;top:606px;width:7px;height:1px;background:#8cb0f8"></div>
<div style="position:absolute;left:1080px;top:607px;width:7px;height:1px;background:#eef4fe"></div>
<div style="position:absolute;left:1081px;top:608px;width:7px;height:1px;background:#8cb0f8"></div>
<div style="position:absolute;left:1080px;top:609px;width:7px;height:1px;background:#eef4fe"></div>
<div style="position:absolute;left:1081px;top:610px;width:7px;height:1px;background:#8cb0f8"></div>
<div style="position:absolute;left:1080px;top:611px;width:7px;height:1px;background:#eef4fe"></div>
<div style="position:absolute;left:1081px;top:612px;width:7px;height:1px;background:#8cb0f8"></div>
<div class="t r" style="left:554px;top:502px;"><b style="margin-right:-3.6px"><s>[</s>R<s>]</s></b><b style="margin-right:-1.2px"> </b><i>列表完成</i><b style="margin-right:-7.2px">: 161 </b><i>字节</i><b style="margin-right:-1.2px"> </b><i>用时</i><b style="margin-right:-7.2px"> 0.58 </b><i>秒</i><b style="margin-right:-13.2px"> (0.3 KB/s)</b></div>
<div class="t " style="left:554px;top:514px;"><b style="margin-right:-3.6px"><s>[</s>R<s>]</s></b><b style="margin-right:-16.8px"> DELE qth8.dll</b></div>
<div class="t g" style="left:554px;top:526px;"><b style="margin-right:-3.6px"><s>[</s>R<s>]</s></b><b style="margin-right:-33.6px"> 250 DELE command successful</b></div>
<div class="t " style="left:554px;top:538px;"><b style="margin-right:-3.6px"><s>[</s>R<s>]</s></b><b style="margin-right:-6px"> PASV</b></div>
<div class="t g" style="left:554px;top:550px;"><b style="margin-right:-3.6px"><s>[</s>R<s>]</s></b><b style="margin-right:-58.8px"> 227 Entering Passive Mode (210,209,88,180,15,47)</b></div>
<div class="t g" style="left:554px;top:562px;"><b style="margin-right:-3.6px"><s>[</s>R<s>]</s></b><b style="margin-right:-1.2px"> </b><i>正在打开数据连接</i><b style="margin-right:-24px"> IP: 210.209.88.180 </b><i>端口</i><b style="margin-right:-7.2px">: 3887</b></div>
<div class="t " style="left:554px;top:574px;"><b style="margin-right:-3.6px"><s>[</s>R<s>]</s></b><b style="margin-right:-10.8px"> LIST -al</b></div>
<div class="t g" style="left:554px;top:586px;"><b style="margin-right:-3.6px"><s>[</s>R<s>]</s></b><b style="margin-right:-63.6px"> 150 Opening ASCII mode data connection for file list</b></div>
<div class="t g" style="left:554px;top:598px;"><b style="margin-right:-3.6px"><s>[</s>R<s>]</s></b><b style="margin-right:-27.6px"> 226 Transfer complete.</b></div>
<div class="t r" style="left:554px;top:610px;"><b style="margin-right:-3.6px"><s>[</s>R<s>]</s></b><b style="margin-right:-1.2px"> </b><i>列表完成</i><b style="margin-right:-7.2px">: 109 </b><i>字节</i><b style="margin-right:-1.2px"> </b><i>用时</i><b style="margin-right:-7.2px"> 0.55 </b><i>秒</i><b style="margin-right:-13.2px"> (0.2 KB/s)</b></div>
<div class="t r" style="left:554px;top:622px;"><i>已删除</i><b style="margin-right:-3.6px"> 0 </b><i>个文件夹以及</i><b style="margin-right:-3.6px"> 1 </b><i>个文件，总计</i><b style="margin-right:-9.6px"> 669 KB </b><i>于</i><b style="margin-right:-7.2px"> 0.64 </b><i>秒。</i></div>
<div style="position:absolute;left:1px;top:636px;width:1090px;height:5px;background:linear-gradient(180deg,#a9a28d 0,#a9a28d 20%,#d9d5c5 21%,#e6e3d5 50%,#ece9d8 100%)"></div>
<div style="position:absolute;left:549px;top:638px;width:1px;height:16px;background:#aca899"></div>
<div style="position:absolute;left:550px;top:638px;width:1px;height:16px;background:#fff"></div>
<div class="t " style="left:558px;top:640px;"><i>空闲</i><b style="margin-right:-10.8px">. (03:11)</b></div>
<svg class="ic" style="left:1081px;top:645px" width="13" height="13"><g fill="#b8b4a4"><rect x="9" y="9" width="2" height="2"/><rect x="5" y="9" width="2" height="2"/><rect x="9" y="5" width="2" height="2"/><rect x="1" y="9" width="2" height="2"/><rect x="9" y="1" width="2" height="2"/><rect x="5" y="5" width="2" height="2"/></g></svg>
</div></body></html>
